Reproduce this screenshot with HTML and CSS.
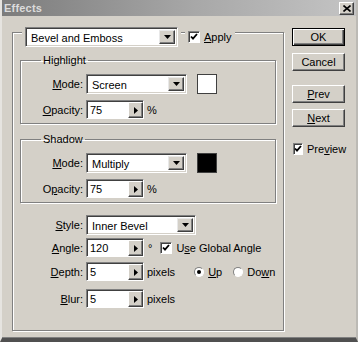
FILE: index.html
```html
<!DOCTYPE html>
<html>
<head>
<meta charset="utf-8">
<link rel="stylesheet" href="styles.css">
</head>
<body>
<div class="window">
  <div class="titlebar">
    <span class="title">Effects</span>
    <span class="close"><svg width="8" height="7" viewBox="0 0 8 7"><path d="M0.5 0.5 L7.5 6.5 M7.5 0.5 L0.5 6.5" stroke="#000" stroke-width="1.6"/></svg></span>
  </div>
  <div class="content">
    <div class="outer">
      <div class="outer-head">
        <div class="head-item">
          <div class="select combo"><span class="val">Bevel and Emboss</span><span class="dd"><svg width="7" height="4" viewBox="0 0 7 4"><path d="M0 0h7L3.5 4z" fill="#000"/></svg></span></div>
        </div>
        <label class="head-item check"><span class="box"><svg width="8" height="8" viewBox="0 0 8 8"><path d="M1 3.5l2 2.2L7 1" stroke="#000" stroke-width="1.8" fill="none"/></svg></span><span><u>A</u>pply</span></label>
      </div>

      <fieldset class="group">
        <legend>Highlight</legend>
        <div class="row r-mode">
          <span class="lbl"><u>M</u>ode:</span>
          <div class="select mode"><span class="val">Screen</span><span class="dd"><svg width="7" height="4" viewBox="0 0 7 4"><path d="M0 0h7L3.5 4z" fill="#000"/></svg></span></div>
          <span class="swatch white"></span>
        </div>
        <div class="row r-opacity">
          <span class="lbl"><u>O</u>pacity:</span>
          <div class="spin"><span class="val">75</span><span class="sbtn"><svg width="4" height="7" viewBox="0 0 4 7"><path d="M0 0v7l4-3.5z" fill="#000"/></svg></span></div>
          <span class="unit">%</span>
        </div>
      </fieldset>

      <fieldset class="group shadow">
        <legend>Shadow</legend>
        <div class="row r-mode">
          <span class="lbl"><u>M</u>ode:</span>
          <div class="select mode"><span class="val">Multiply</span><span class="dd"><svg width="7" height="4" viewBox="0 0 7 4"><path d="M0 0h7L3.5 4z" fill="#000"/></svg></span></div>
          <span class="swatch black"></span>
        </div>
        <div class="row r-opacity">
          <span class="lbl">O<u>p</u>acity:</span>
          <div class="spin"><span class="val">75</span><span class="sbtn"><svg width="4" height="7" viewBox="0 0 4 7"><path d="M0 0v7l4-3.5z" fill="#000"/></svg></span></div>
          <span class="unit">%</span>
        </div>
      </fieldset>

      <div class="row main r-style">
        <span class="lbl"><u>S</u>tyle:</span>
        <div class="select style"><span class="val">Inner Bevel</span><span class="dd"><svg width="7" height="4" viewBox="0 0 7 4"><path d="M0 0h7L3.5 4z" fill="#000"/></svg></span></div>
      </div>
      <div class="row main r-angle">
        <span class="lbl"><u>A</u>ngle:</span>
        <div class="spin"><span class="val">120</span><span class="sbtn"><svg width="4" height="7" viewBox="0 0 4 7"><path d="M0 0v7l4-3.5z" fill="#000"/></svg></span></div>
        <span class="unit deg">°</span>
        <label class="check global"><span class="box"><svg width="8" height="8" viewBox="0 0 8 8"><path d="M1 3.5l2 2.2L7 1" stroke="#000" stroke-width="1.8" fill="none"/></svg></span><span>U<u>s</u>e Global Angle</span></label>
      </div>
      <div class="row main r-depth">
        <span class="lbl"><u>D</u>epth:</span>
        <div class="spin"><span class="val">5</span><span class="sbtn"><svg width="4" height="7" viewBox="0 0 4 7"><path d="M0 0v7l4-3.5z" fill="#000"/></svg></span></div>
        <span class="unit">pixels</span>
        <label class="radio up"><span class="dot on"></span><span><u>U</u>p</span></label>
        <label class="radio"><span class="dot"></span><span>Do<u>w</u>n</span></label>
      </div>
      <div class="row main r-blur">
        <span class="lbl"><u>B</u>lur:</span>
        <div class="spin"><span class="val">5</span><span class="sbtn"><svg width="4" height="7" viewBox="0 0 4 7"><path d="M0 0v7l4-3.5z" fill="#000"/></svg></span></div>
        <span class="unit">pixels</span>
      </div>
    </div>

    <div class="side">
      <button class="btn default">OK</button>
      <button class="btn cancel">Cancel</button>
      <button class="btn prev"><u>P</u>rev</button>
      <button class="btn next"><u>N</u>ext</button>
      <label class="check preview"><span class="box"><svg width="8" height="8" viewBox="0 0 8 8"><path d="M1 3.5l2 2.2L7 1" stroke="#000" stroke-width="1.8" fill="none"/></svg></span><span>Pre<u>v</u>iew</span></label>
    </div>
  </div>
</div>
</body>
</html>
```

FILE: styles.css
```css
* { box-sizing: border-box; }
html, body { margin: 0; padding: 0; background: #d4d0c8; }
body { font-family: "Liberation Sans", Arial, sans-serif; font-size: 11px; color: #000; }

.window {
  width: 358px;
  height: 342px;
  background: #d4d0c8;
  border-left: 2px solid #e6e4e0;
  border-right: 2px solid #bcbab5;
  border-bottom: 4px solid #505050;
  box-shadow: inset 0 -1px 0 #808080;
  display: flex;
  flex-direction: column;
}

.titlebar {
  height: 16px;
  background: linear-gradient(90deg, #7c7c7c 0%, #a8a8a8 55%, #c4c4c4 100%);
  display: flex;
  align-items: center;
  justify-content: space-between;
  padding: 0 2px 0 2px;
}
.title { color: #dcdcdc; font-weight: bold; font-size: 11px; letter-spacing: 0.2px; }
.close {
  width: 15px; height: 13px;
  background: #d4d0c8;
  border: 1px solid; border-color: #fff #404040 #404040 #fff;
  box-shadow: inset -1px -1px 0 #808080;
  display: flex; align-items: center; justify-content: center;
}

.content {
  display: flex;
  padding: 11px 0 0 10px;
  gap: 8px;
}

/* outer etched group */
.outer {
  width: 272px;
  height: 299px;
  margin-top: 5px;
  border: 1px solid #808080;
  box-shadow: inset 1px 1px 0 #fff, 1px 1px 0 #fff;
  padding: 0 5px 0 5px;
}
.outer-head {
  display: flex;
  align-items: center;
  margin-top: -6px;
  padding-left: 4px;
}
.head-item { background: #d4d0c8; padding: 0 3px; }
.head-item.check { margin-left: 4px; padding-right: 3px; }

/* inputs */
.select {
  height: 20px;
  background: #fff;
  border: 1px solid; border-color: #808080 #fff #fff #808080;
  box-shadow: inset 1px 1px 0 #404040, inset -1px -1px 0 #d4d0c8;
  display: flex; align-items: stretch;
  padding: 2px 2px 2px 2px;
}
.select .val { flex: 1; padding-left: 3px; line-height: 16px; white-space: nowrap; overflow: hidden; }
.select .dd {
  width: 16px;
  background: #d4d0c8;
  border: 1px solid; border-color: #e8e8e8 #404040 #404040 #e8e8e8;
  box-shadow: inset -1px -1px 0 #808080;
  display: flex; align-items: center; justify-content: center;
}
.combo { width: 153px; }
.mode { width: 101px; }
.style { width: 110px; }

.spin {
  width: 58px; height: 19px;
  background: #fff;
  border: 1px solid; border-color: #808080 #fff #fff #808080;
  box-shadow: inset 1px 1px 0 #404040;
  display: flex; align-items: stretch;
  padding: 1px 0 0 1px;
}
.spin .val { flex: 1; padding-left: 2px; line-height: 16px; }
.spin .sbtn {
  width: 15px;
  background: #d4d0c8;
  border: 1px solid; border-color: #fff #404040 #404040 #fff;
  box-shadow: inset -1px -1px 0 #808080;
  display: flex; align-items: center; justify-content: center;
}

.swatch { width: 20px; height: 20px; margin-left: 10px; border: 1px solid #404040; }
.swatch.white { background: #fff; }
.swatch.black { background: #000; }

.check { display: flex; align-items: center; gap: 4px; }
.box {
  width: 12px; height: 12px;
  background: #fff;
  border: 1px solid; border-color: #808080 #fff #fff #808080;
  box-shadow: inset 1px 1px 0 #404040;
  display: flex; align-items: center; justify-content: center;
}

/* groups */
.group {
  margin: 7px 2px 0 2px;
  border: 1px solid #808080;
  box-shadow: inset 1px 1px 0 #fff, 1px 1px 0 #fff;
  padding: 7px 0 4px 0;
  min-width: 0;
}
.group legend { margin-left: 20px; padding: 0 2px; line-height: 13px; }
.group.shadow { margin-top: 9px; }

.row { display: flex; align-items: center; }
.lbl { text-align: right; padding-right: 3px; white-space: nowrap; }
.group .lbl { width: 65px; }
.main .lbl { width: 68px; }
.group .r-opacity { margin-top: 6px; }
.unit { margin-left: 3px; }
.deg { margin-left: 4px; }
.global { margin-left: 8px; }

.r-style { margin-top: 12px; }
.r-angle { margin-top: 3px; }
.r-depth { margin-top: 5px; }
.r-blur { margin-top: 8px; }

.radio { display: flex; align-items: center; gap: 4px; }
.radio.up { margin-left: 19px; }
.radio + .radio { margin-left: 11px; }
.dot {
  width: 10px; height: 10px; border-radius: 50%;
  background: #fff;
  border: 1px solid; border-color: #808080 #fff #fff #808080;
  display: flex; align-items: center; justify-content: center;
}
.dot.on::after { content: ""; width: 4px; height: 4px; border-radius: 50%; background: #000; }

/* side buttons */
.side { width: 53px; display: flex; flex-direction: column; }
.btn {
  font-family: "Liberation Sans", Arial, sans-serif;
  font-size: 11px;
  height: 18px;
  padding: 0;
  background: #d4d0c8;
  border: 1px solid; border-color: #fff #404040 #404040 #fff;
  box-shadow: inset -1px -1px 0 #808080;
  color: #000;
}
.btn.default { margin-top: 1px; border: 1px solid #000; box-shadow: inset 1px 1px 0 #fff, inset -1px -1px 0 #404040, inset -2px -2px 0 #808080; }
.btn.cancel { margin-top: 7px; }
.btn.prev { margin-top: 14px; }
.btn.next { margin-top: 6px; }
.preview { margin-top: 16px; margin-left: 1px; }
```
